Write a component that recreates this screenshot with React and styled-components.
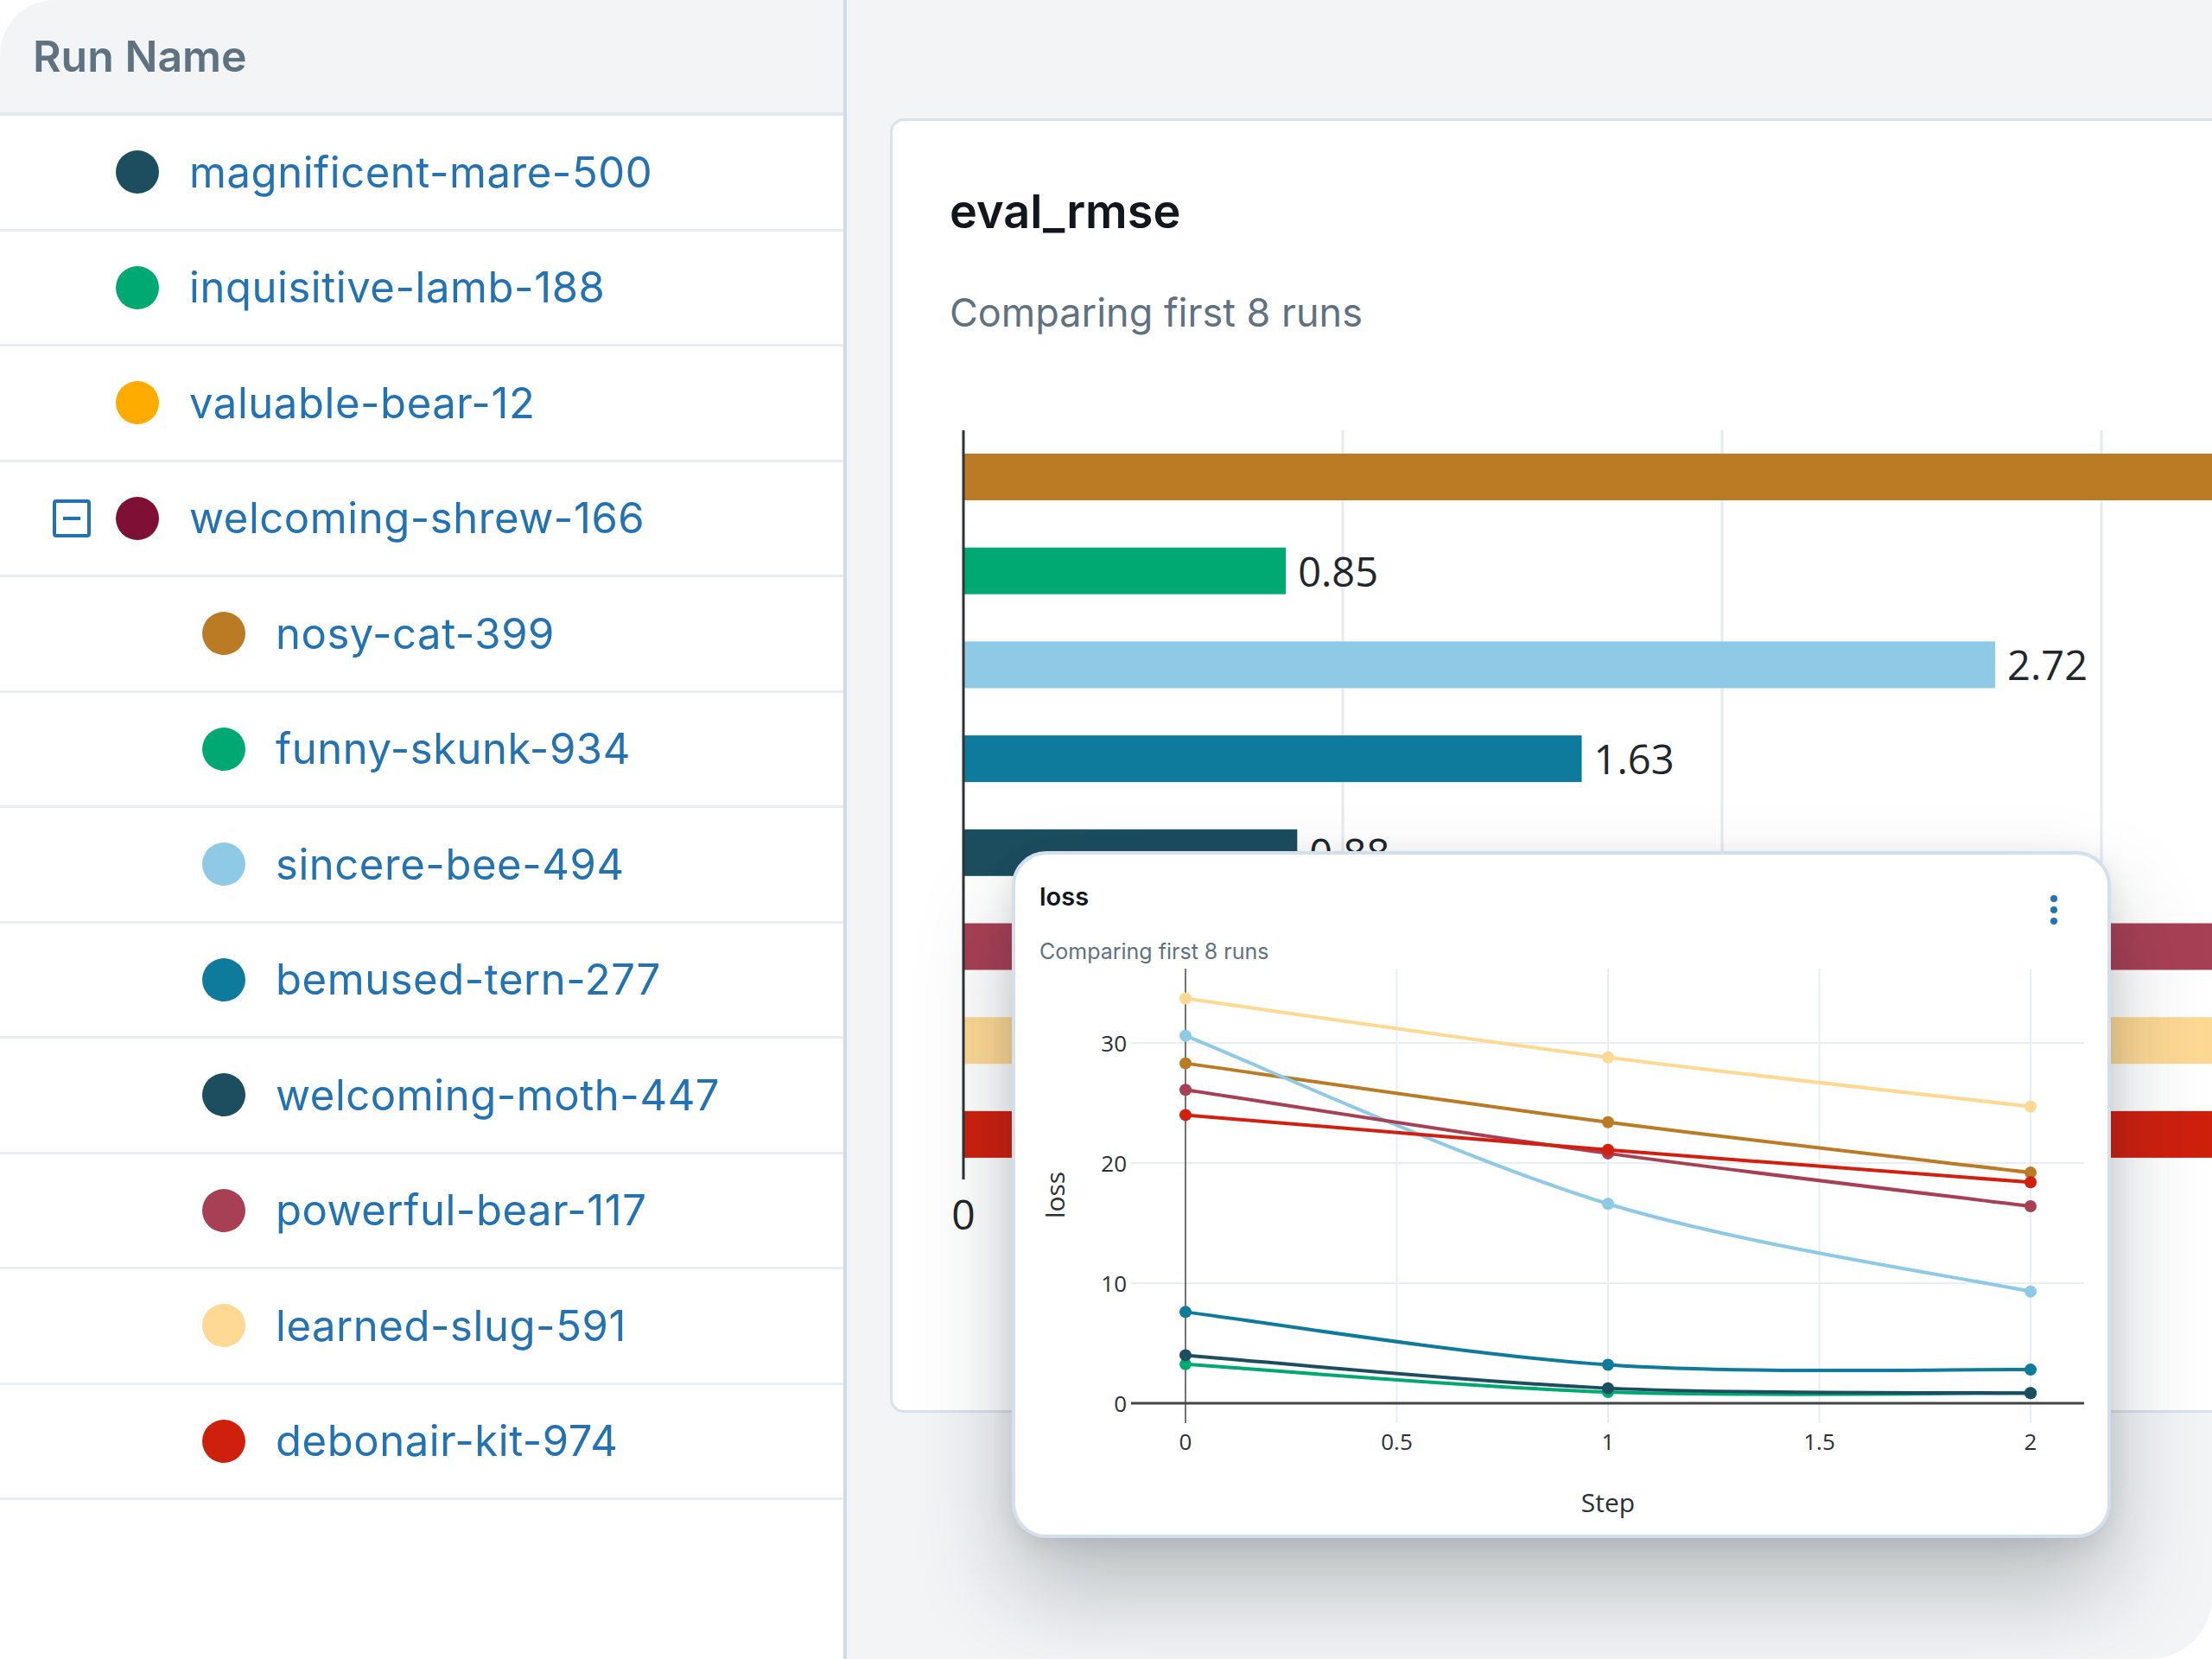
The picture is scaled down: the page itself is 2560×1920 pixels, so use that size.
import React from 'react';
import styled, { createGlobalStyle } from 'styled-components';

const GlobalStyle = createGlobalStyle`
  html, body {
    margin: 0;
    padding: 0;
    background: #ffffff;
  }
  body {
    font-family: Inter, "Noto Sans", sans-serif;
  }
`;

const runs = [
  { name: 'magnificent-mare-500', color: '#1c4e5f' },
  { name: 'inquisitive-lamb-188', color: '#00a972' },
  { name: 'valuable-bear-12', color: '#ffab00' },
  { name: 'welcoming-shrew-166', color: '#7d1034', expanded: true },
  { name: 'nosy-cat-399', color: '#bb7a24', child: true },
  { name: 'funny-skunk-934', color: '#00a972', child: true },
  { name: 'sincere-bee-494', color: '#8ecae6', child: true },
  { name: 'bemused-tern-277', color: '#0e7a9c', child: true },
  { name: 'welcoming-moth-447', color: '#1c4e5f', child: true },
  { name: 'powerful-bear-117', color: '#a84055', child: true },
  { name: 'learned-slug-591', color: '#fed994', child: true },
  { name: 'debonair-kit-974', color: '#cf200e', child: true },
];

// eval_rmse per child run; values over the frame edge get no label in view
const rmse = [
  { v: 3.6, color: '#bb7a24' },
  { v: 0.85, color: '#00a972' },
  { v: 2.72, color: '#8ecae6' },
  { v: 1.63, color: '#0e7a9c' },
  { v: 0.88, color: '#1c4e5f' },
  { v: 3.6, color: '#a84055' },
  { v: 3.6, color: '#fed994' },
  { v: 3.6, color: '#cf200e' },
];

const loss = [
  { color: '#bb7a24', y: [28.3, 23.4, 19.2] },
  { color: '#00a972', y: [3.25, 0.93, 0.85] },
  { color: '#8ecae6', y: [30.6, 16.6, 9.3] },
  { color: '#0e7a9c', y: [7.6, 3.2, 2.8] },
  { color: '#1c4e5f', y: [4.0, 1.25, 0.85] },
  { color: '#a84055', y: [26.1, 20.8, 16.4] },
  { color: '#fed994', y: [33.7, 28.8, 24.7] },
  { color: '#d31f0f', y: [24.0, 21.1, 18.4] },
];

const Frame = styled.div`
  width: 2560px;
  height: 1920px;
  display: flex;
  overflow: hidden;
  background: #f2f4f6;
  border-top-left-radius: 64px;
  border-bottom-right-radius: 72px;
`;

const RunList = styled.aside`
  width: 980px;
  flex: none;
  box-sizing: border-box;
  background: #ffffff;
  border-right: 4px solid #cfdce8;
  display: flex;
  flex-direction: column;
`;

const ListHeader = styled.div`
  height: 134px;
  box-sizing: border-box;
  flex: none;
  display: flex;
  align-items: center;
  padding-left: 38px;
  background: #f2f4f6;
  border-bottom: 4px solid #e1e8ee;
  color: #5f7281;
  font-size: 50px;
  font-weight: 600;
`;

const Row = styled.div`
  height: 133.5px;
  box-sizing: border-box;
  flex: none;
  display: flex;
  align-items: center;
  padding-left: ${({ $child }) => ($child ? 234 : 61)}px;
  border-bottom: 3px solid #e9eef3;
`;

const ToggleSlot = styled.span`
  width: 44px;
  height: 44px;
  flex: none;
  margin-right: 29px;
  display: flex;
`;

const Dot = styled.span`
  width: 50px;
  height: 50px;
  flex: none;
  border-radius: 50%;
  background: ${({ $color }) => $color};
  margin-right: 35px;
`;

const RunName = styled.span`
  color: #2272b4;
  font-size: 49px;
  letter-spacing: 0.55px;
  white-space: nowrap;
`;

const Workspace = styled.main`
  position: relative;
  flex: 1;
  min-width: 0;
  padding: 137px 0 0 50px;
`;

const ChartCard = styled.section`
  width: 1700px;
  height: 1498px;
  box-sizing: border-box;
  background: #ffffff;
  border: 3px solid #d8e2eb;
  border-radius: 16px;
`;

const CardHeader = styled.div`
  padding: 73px 66px 0;
`;

const CardTitle = styled.h2`
  margin: 0;
  font-size: 54px;
  line-height: 64px;
  font-weight: 600;
  color: #11171c;
`;

const CardSub = styled.div`
  margin-top: 57px;
  font-size: 45px;
  line-height: 56px;
  color: #5f7281;
`;

const Plot = styled.svg`
  display: block;
  margin-top: ${({ $gap }) => $gap}px;
  font-family: "Open Sans", "DejaVu Sans", sans-serif;
`;

const Popup = styled.div`
  position: absolute;
  left: 191px;
  top: 985px;
  width: 1272px;
  height: 795px;
  box-sizing: border-box;
  background: #ffffff;
  border: 4px solid #d3dfea;
  border-radius: 40px;
  box-shadow: 0 60px 110px rgba(25, 35, 45, 0.26), 0 8px 30px rgba(25, 35, 45, 0.1);
`;

const PopupHeader = styled.div`
  height: 126px;
  box-sizing: border-box;
  padding: 31px 28px 0;
`;

const PopupTitleRow = styled.div`
  display: flex;
  justify-content: space-between;
  align-items: flex-start;
`;

const PopupTitle = styled.div`
  font-size: 29px;
  line-height: 36px;
  font-weight: 600;
  color: #11171c;
`;

const Kebab = styled.svg`
  margin-top: 16px;
  margin-right: 30px;
  flex: none;
`;

const PopupSub = styled.div`
  margin-top: 16px;
  font-size: 25px;
  line-height: 30px;
  color: #5f7281;
`;

const spline = (pts) => {
  let d = `M${pts[0][0]},${pts[0][1]}`;
  for (let i = 0; i < pts.length - 1; i++) {
    const p0 = pts[i - 1] || pts[i];
    const p1 = pts[i];
    const p2 = pts[i + 1];
    const p3 = pts[i + 2] || p2;
    const t = 1 / 6;
    const c1 = [p1[0] + (p2[0] - p0[0]) * t, p1[1] + (p2[1] - p0[1]) * t];
    const c2 = [p2[0] - (p3[0] - p1[0]) * t, p2[1] - (p3[1] - p1[1]) * t];
    d += ` C${c1[0]},${c1[1]} ${c2[0]},${c2[1]} ${p2[0]},${p2[1]}`;
  }
  return d;
};

const MinusBox = () => (
  <svg width="44" height="44" viewBox="0 0 44 44">
    <rect x="2" y="2" width="40" height="40" rx="2" fill="none" stroke="#2272b4" strokeWidth="4" />
    <line x1="12" y1="22" x2="32" y2="22" stroke="#2272b4" strokeWidth="4" />
  </svg>
);

// bar chart, drawn in page coordinates
const BAR_X0 = 1115;
const BAR_UNIT = 439;
const VISIBLE_MAX = 3;

const BarChart = () => (
  <Plot $gap={80} width="1660" height="1000" viewBox="1033 470 1660 1000">
    {[1, 2, 3].map((g) => (
      <line key={g} x1={BAR_X0 + g * BAR_UNIT} y1="498" x2={BAR_X0 + g * BAR_UNIT} y2="1363" stroke="#e5ebf0" strokeWidth="3" />
    ))}
    {rmse.map((b, i) => {
      const top = 525 + i * 108.7;
      const end = BAR_X0 + b.v * BAR_UNIT;
      return (
        <g key={i}>
          <rect x={BAR_X0} y={top} width={end - BAR_X0} height="54" fill={b.color} />
          {b.v < VISIBLE_MAX && (
            <text x={end + 14} y={top + 27} dominantBaseline="central" fontSize="47" fill="#1f272d">
              {b.v.toFixed(2)}
            </text>
          )}
        </g>
      );
    })}
    <line x1={BAR_X0} y1="498" x2={BAR_X0} y2="1365" stroke="#2d3338" strokeWidth="3" />
    <text x={BAR_X0} y="1404" textAnchor="middle" dominantBaseline="central" fontSize="48" fill="#1f272d">0</text>
  </Plot>
);

const LX = (s) => 1372 + s * 489;
const LY = (v) => 1624 - v * 13.9;

const LossChart = () => (
  <Plot $gap={0} width="1264" height="661" viewBox="1175 1115 1264 661">
    {[10, 20, 30].map((v) => (
      <line key={v} x1="1309" y1={LY(v)} x2="2412" y2={LY(v)} stroke="#e8eef3" strokeWidth="2" />
    ))}
    {[0.5, 1, 1.5, 2].map((s) => (
      <line key={s} x1={LX(s)} y1="1121" x2={LX(s)} y2="1647" stroke="#e8eef3" strokeWidth="2" />
    ))}
    <line x1="1309" y1="1624" x2="2412" y2="1624" stroke="#444" strokeWidth="3" />
    <line x1="1372" y1="1121" x2="1372" y2="1647" stroke="#444" strokeWidth="1.5" />
    {loss.map((s, i) => {
      const pts = s.y.map((v, k) => [LX(k), LY(v)]);
      return (
        <g key={i}>
          <path d={spline(pts)} fill="none" stroke={s.color} strokeWidth="4" />
          {pts.map((p, k) => (
            <circle key={k} cx={p[0]} cy={p[1]} r="7" fill={s.color} />
          ))}
        </g>
      );
    })}
    {[0, 10, 20, 30].map((v) => (
      <text key={v} x="1304" y={LY(v)} textAnchor="end" dominantBaseline="central" fontSize="26" fill="#2a3035">{v}</text>
    ))}
    {[0, 0.5, 1, 1.5, 2].map((s) => (
      <text key={s} x={LX(s)} y="1668" textAnchor="middle" dominantBaseline="central" fontSize="26" fill="#2a3035">{s}</text>
    ))}
    <text x="1861" y="1738" textAnchor="middle" dominantBaseline="central" fontSize="30" fill="#2a3035">Step</text>
    <text x="1220" y="1383" textAnchor="middle" dominantBaseline="central" fontSize="30" fill="#2a3035" transform="rotate(-90 1220 1383)">loss</text>
  </Plot>
);

const App = () => (
  <>
    <GlobalStyle />
    <Frame>
      <RunList>
        <ListHeader>Run Name</ListHeader>
        {runs.map((r) => (
          <Row key={r.name} $child={r.child}>
            {!r.child && <ToggleSlot>{r.expanded && <MinusBox />}</ToggleSlot>}
            <Dot $color={r.color} />
            <RunName>{r.name}</RunName>
          </Row>
        ))}
      </RunList>
      <Workspace>
        <ChartCard>
          <CardHeader>
            <CardTitle>eval_rmse</CardTitle>
            <CardSub>Comparing first 8 runs</CardSub>
          </CardHeader>
          <BarChart />
        </ChartCard>
        <Popup>
          <PopupHeader>
            <PopupTitleRow>
              <PopupTitle>loss</PopupTitle>
              <Kebab width="8" height="34" viewBox="0 0 8 34">
                <circle cx="4" cy="4" r="4" fill="#2272b4" />
                <circle cx="4" cy="17" r="4" fill="#2272b4" />
                <circle cx="4" cy="30" r="4" fill="#2272b4" />
              </Kebab>
            </PopupTitleRow>
            <PopupSub>Comparing first 8 runs</PopupSub>
          </PopupHeader>
          <LossChart />
        </Popup>
      </Workspace>
    </Frame>
  </>
);

export default App;
